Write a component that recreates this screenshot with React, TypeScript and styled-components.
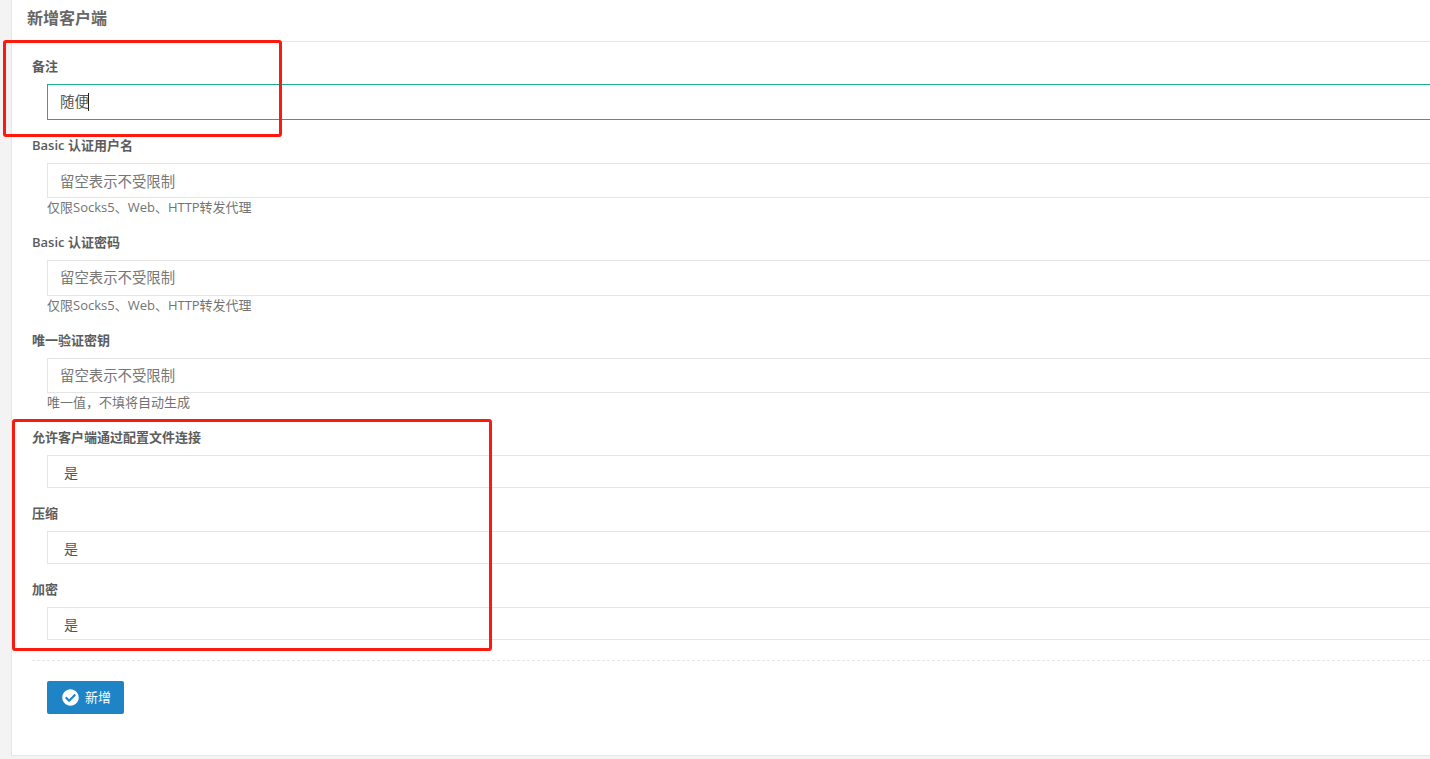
import React from "react";
import styled, { createGlobalStyle } from "styled-components";
import { FaCheckCircle } from "react-icons/fa";

const Global = createGlobalStyle`
  html, body { margin: 0; padding: 0; height: 759px; overflow: hidden; background: #f3f3f3; }
  body { font-family: "Open Sans", "Noto Sans CJK SC", sans-serif; color: #555; }
`;

const FONT = `"Open Sans", "Noto Sans CJK SC", sans-serif`;

const Page = styled.div`
  position: relative;
  width: 1430px;
  height: 759px;
  overflow: hidden;
  padding-left: 11px;
  box-sizing: border-box;
`;

const Card = styled.div`
  width: 1460px;
  height: 756px;
  box-sizing: border-box;
  background: #fff;
  border: 1px solid #e7e7e7;
  border-top: 0;
`;

const Header = styled.div`
  height: 42px;
  box-sizing: border-box;
  border-bottom: 1px solid #e7e7e7;
  padding: 8px 0 0 15px;
`;

const Title = styled.h3`
  margin: 0;
  font: 600 16px/20px ${FONT};
  color: #666;
`;

const Body = styled.form`
  padding: 0 0 0 20px;
  display: flex;
  flex-direction: column;
`;

const Group = styled.div<{ $top: number }>`
  display: flex;
  flex-direction: column;
  padding-top: ${(p) => p.$top}px;
`;

const Label = styled.label`
  font: 600 13px/18px ${FONT};
  color: #5c5c5c;
  height: 18px;
  margin-bottom: 9px;
`;

const FieldWrap = styled.div`
  position: relative;
  margin-left: 15px;
`;

const Input = styled.input<{ $active?: boolean; $h: number; $pad: string }>`
  display: block;
  width: 100%;
  height: ${(p) => p.$h}px;
  box-sizing: border-box;
  padding: ${(p) => p.$pad};
  border: 1px solid ${(p) => (p.$active ? "#1aad8f" : "#e5e5e5")};
  border-radius: 0;
  outline: none;
  background: #fff;
  font: 400 14.4px/20px ${FONT};
  color: #555;
  &::placeholder { color: #777; opacity: 1; }
`;

const Caret = styled.span`
  position: absolute;
  left: 41px;
  top: 9px;
  width: 1px;
  height: 18px;
  background: #222;
`;

const Select = styled.select`
  display: block;
  width: 100%;
  height: 33px;
  box-sizing: border-box;
  padding: 2px 16px 0;
  border: 1px solid #e5e5e5;
  border-radius: 0;
  outline: none;
  background: #fff;
  appearance: none;
  font: 400 14px/20px ${FONT};
  color: #555;
`;

const Help = styled.div`
  margin-left: 15px;
  height: 19px;
  font: 400 13px/18px ${FONT};
  color: #737373;
`;

const Actions = styled.div`
  margin-top: 20px;
  border-top: 1px dashed #e7e7e7;
  padding: 20px 0 0 15px;
  display: flex;
`;

const Button = styled.button`
  height: 33px;
  width: 77px;
  display: flex;
  align-items: center;
  gap: 6px;
  padding: 0 0 0 15px;
  border: 0;
  border-radius: 2px;
  background: #1e84c6;
  color: #fff;
  font: 400 13px/18px ${FONT};
  svg { width: 17px; height: 17px; }
`;

const ButtonText = styled.span`
  margin-top: -2px;
`;

const Mark = styled.div<{ $x: number; $y: number; $w: number; $h: number }>`
  position: absolute;
  left: ${(p) => p.$x}px;
  top: ${(p) => p.$y}px;
  width: ${(p) => p.$w}px;
  height: ${(p) => p.$h}px;
  box-sizing: border-box;
  border: 3px solid #fb1a0e;
  border-radius: 3px;
  pointer-events: none;
`;

const textFields = [
  { top: 16, label: "Basic 认证用户名", help: "仅限Socks5、Web、HTTP转发代理", h: 35, pad: "1px 12px 0" },
  { top: 16, label: "Basic 认证密码", help: "仅限Socks5、Web、HTTP转发代理", h: 36, pad: "0 12px 1px" },
  { top: 16, label: "唯一验证密钥", help: "唯一值\uFF0C不填将自动生成", h: 35, pad: "0 12px" },
];

const selects = [
  { top: 16, label: "允许客户端通过配置文件连接" },
  { top: 16, label: "压缩" },
  { top: 16, label: "加密" },
];

export default function App() {
  return (
    <Page>
      <Global />
      <Card>
        <Header>
          <Title>新增客户端</Title>
        </Header>
        <Body>
          <Group $top={15}>
            <Label>备注</Label>
            <FieldWrap>
              <Input $active $h={36} $pad="0 12px 3px" defaultValue="随便" />
              <Caret />
            </FieldWrap>
          </Group>
          {textFields.map((f) => (
            <Group key={f.label} $top={f.top}>
              <Label>{f.label}</Label>
              <FieldWrap>
                <Input $h={f.h} $pad={f.pad} placeholder="留空表示不受限制" />
              </FieldWrap>
              <Help>{f.help}</Help>
            </Group>
          ))}
          {selects.map((f) => (
            <Group key={f.label} $top={f.top}>
              <Label>{f.label}</Label>
              <FieldWrap>
                <Select defaultValue="1">
                  <option value="1">是</option>
                  <option value="0">否</option>
                </Select>
              </FieldWrap>
            </Group>
          ))}
          <Actions>
            <Button type="button">
              <FaCheckCircle />
              <ButtonText>新增</ButtonText>
            </Button>
          </Actions>
        </Body>
      </Card>
      <Mark $x={3} $y={40} $w={279} $h={97} />
      <Mark $x={12} $y={419} $w={480} $h={232} />
    </Page>
  );
}
